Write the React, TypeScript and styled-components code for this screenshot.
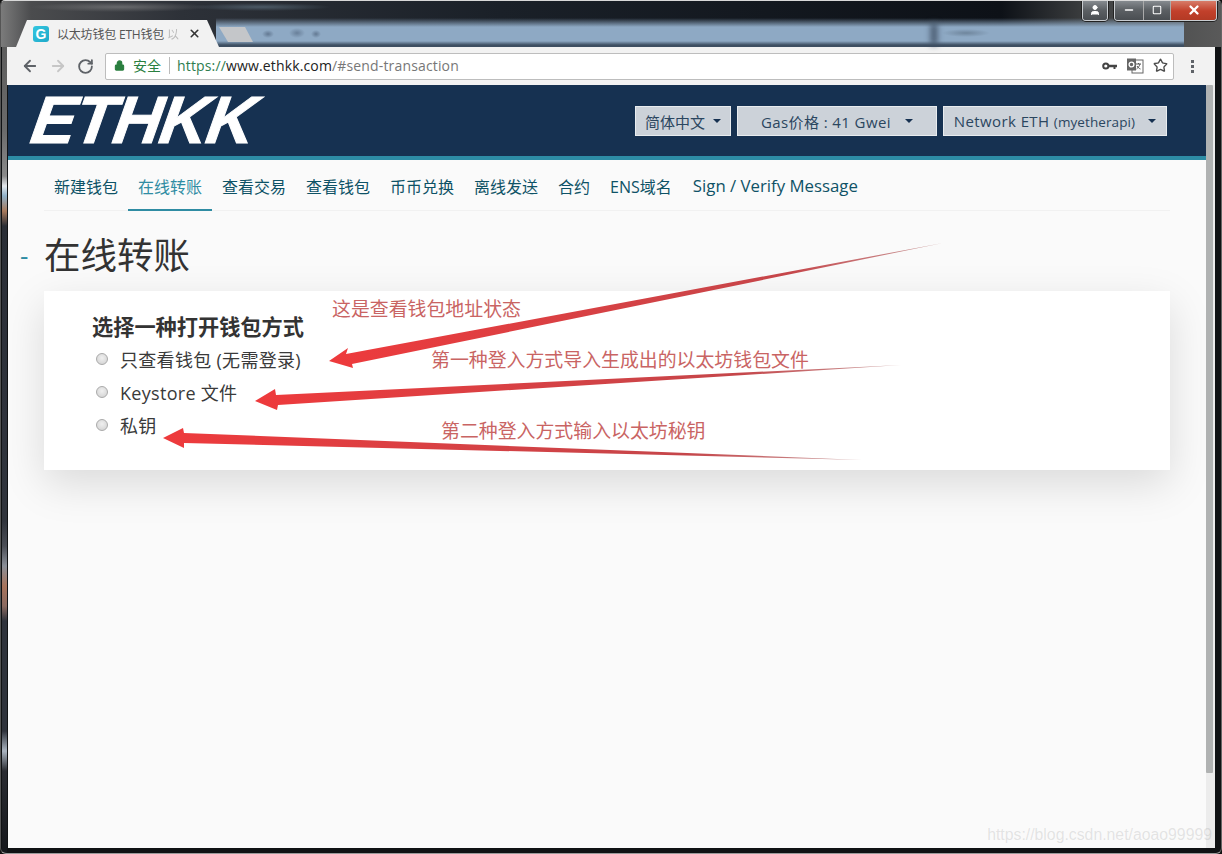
import React from "react";
import styled, { createGlobalStyle } from "styled-components";
import { ArrowLeft, ArrowRight, RotateCw, Lock, Star, X, Minus, User, Square } from "lucide-react";

const CJK = `"Open Sans", "Noto Sans CJK SC", sans-serif`;

const Global = createGlobalStyle`
  html, body { margin: 0; padding: 0; overflow: hidden; background: #111; }
  * { box-sizing: border-box; }
`;

const Win = styled.div`
  position: relative;
  width: 1222px;
  height: 854px;
  display: flex;
  flex-direction: column;
  overflow: hidden;
  font-family: ${CJK};
  background:
    linear-gradient(180deg,
      #555 0, #6b6b6b 130px, #8a8a8a 175px, #e4e8ec 185px, #8fb0c8 195px, #a87a5c 210px, #2a2e36 225px,
      #2f333c 420px, #30343c 520px, #4a4d55 545px, #8a8f98 565px, #a8745c 585px, #8a6a60 605px, #2f333c 620px,
      #2f333c 730px, #aab4c0 750px, #2a2c32 770px, #15171b 854px) no-repeat 1px 0 / 5px 100%,
    #101214;
  border-top: 1px solid #d8d8d8;
  border-left: 1px solid #555;
  border-right: 1px solid #666;
  border-bottom: 1px solid #9a9a9a;
  border-radius: 5px 5px 6px 6px;
`;

const TabStrip = styled.div`
  position: relative;
  height: 46px;
  flex: none;
  display: flex;
  align-items: flex-end;
  padding-left: 15px;
  background:
    radial-gradient(ellipse 6px 4px at 267px 33px, rgba(80,100,125,.7), transparent),
    radial-gradient(ellipse 8px 5px at 296px 32px, rgba(80,100,125,.6), transparent),
    radial-gradient(ellipse 5px 4px at 315px 33px, rgba(80,100,125,.7), transparent),
    radial-gradient(ellipse 24px 4px at 965px 32px, rgba(90,110,130,.6), transparent),
    linear-gradient(180deg, rgba(0,0,0,0) 0, rgba(0,0,0,0) 17px, #8ea9c4 26px, #8ea9c4 40px, #3e4f62 44px, #3e4f62 46px) no-repeat 215px 0 / 968px 100%,
    radial-gradient(ellipse 90px 5px at 120px 6px, rgba(150,150,150,.5), transparent),
    radial-gradient(ellipse 70px 4px at 260px 6px, rgba(100,120,135,.6), transparent),
    linear-gradient(90deg, #7b7b7b 0, #4b4c4e 30px, #2d3138 180px, #1a2028 500px, #0d1117 1000px, #3f4142 1090px, #5a5a5a 1222px);
`;

const Seam = styled.div`
  position: absolute;
  left: 930px;
  top: 22px;
  width: 6px;
  height: 22px;
  background: #3f4f63;
  filter: blur(3px);
`;

const Tab = styled.div`
  width: 203px;
  height: 27px;
  display: flex;
  align-items: center;
  gap: 8px;
  padding: 0 18px 0 17px;
  background: #f2f2f2;
  clip-path: polygon(0 100%, 11px 0, calc(100% - 12px) 0, 100% 100%);
  font-size: 12px;
  color: #555;
  white-space: nowrap;
`;

const Favicon = styled.span`
  flex: none;
  width: 16px;
  height: 16px;
  border-radius: 3px;
  background: linear-gradient(135deg, #34c6e0, #1fa9c9);
  color: #fff;
  font: bold 14px/16px "Liberation Sans", sans-serif;
  text-align: center;
`;

const TabTitle = styled.span`
  flex: 1;
  min-width: 0;
  overflow: hidden;
  letter-spacing: -0.2px;
`;

const FadedChar = styled.span`
  opacity: .35;
`;

const NewTab = styled.div`
  width: 34px;
  height: 15px;
  margin: 0 0 5px 0;
  background: #c4c6c9;
  clip-path: polygon(0 0, 26px 0, 100% 100%, 9px 100%);
`;

const Caption = styled.div`
  position: absolute;
  right: 4px;
  top: -1px;
  display: flex;
  gap: 6px;
`;

const CapGroup = styled.div`
  display: flex;
  height: 21px;
  border: 1px solid #c8ccd0;
  border-top: none;
  border-radius: 0 0 4px 4px;
  overflow: hidden;
  box-shadow: 0 0 0 1px #222;
`;

const CapBtn = styled.div<{ $w: number; $close?: boolean }>`
  width: ${(p) => p.$w}px;
  display: flex;
  align-items: center;
  justify-content: center;
  color: #fff;
  background: ${(p) =>
    p.$close
      ? "linear-gradient(180deg, #d9826f 0, #c2402b 55%, #b33a25 100%)"
      : "linear-gradient(180deg, #8a8f94 0, #5c6064 50%, #4a4e52 100%)"};
  & + & { border-left: 1px solid #aaa; }
`;

const Toolbar = styled.div`
  flex: none;
  height: 38px;
  margin: 0 6px 0 6px;
  display: flex;
  align-items: center;
  padding: 0 21px 0 14px;
  background: #f2f2f2;
  color: #5f6368;
`;

const NavIcon = styled.span<{ $dim?: boolean }>`
  display: flex;
  width: 28px;
  color: ${(p) => (p.$dim ? "#c6c6c6" : "#5f6368")};
`;

const Omnibox = styled.div`
  flex: 1;
  height: 27px;
  display: flex;
  align-items: center;
  padding: 0 5px 1px 8px;
  background: #fff;
  border: 1px solid #bdbdbd;
  border-radius: 2px;
`;

const Secure = styled.span`
  display: flex;
  align-items: center;
  gap: 8px;
  color: #2a7f3f;
  font-size: 14px;
  padding-right: 8px;
  margin-right: 7px;
  border-right: 1px solid #bbb;
  line-height: 17px;
`;

const Url = styled.span`
  flex: 1;
  color: #777;
  letter-spacing: .15px;
  white-space: nowrap;
  font-size: 14px;
`;

const UrlScheme = styled.span`
  color: #2e7d4f;
`;

const UrlHost = styled.span`
  color: #222;
`;

const OmniIcons = styled.div`
  display: flex;
  align-items: center;
  gap: 9px;
  color: #4d4d4d;
`;

const Dots = styled.div`
  flex: none;
  width: 3px;
  height: 14px;
  margin-left: 17px;
  background: radial-gradient(circle at center, #5f6368 1.5px, transparent 1.6px) 0 0 / 3px 5px;
`;

const Viewport = styled.div`
  flex: 1;
  min-height: 0;
  margin: 0 6px 5px 7px;
  display: flex;
  background: #fafafa;
`;

const Page = styled.div`
  flex: 1;
  min-width: 0;
  display: flex;
  flex-direction: column;
`;

const Scrollbar = styled.div`
  flex: none;
  width: 9px;
  padding-right: 2px;
  background: #ececec;
  display: flex;
`;

const Thumb = styled.div`
  width: 100%;
  height: 688px;
  background: #b0b2b2;
  border-radius: 1px;
`;

const Header = styled.header`
  flex: none;
  height: 75px;
  display: flex;
  align-items: flex-start;
  justify-content: space-between;
  padding: 0 39px 0 22px;
  background: #163151;
  border-bottom: 4px solid #2d8ca5;
`;

const Logo = styled.div`
  font: italic 700 67px/69px "Liberation Sans", sans-serif;
  color: #fff;
  letter-spacing: -1.8px;
  margin: 0 0 0 -3px;
  transform: skewX(-9deg);
  transform-origin: 0 100%;
  -webkit-text-stroke: 1px #fff;
`;

const Dropdowns = styled.div`
  display: flex;
  gap: 6px;
  margin-top: 21px;
`;

const Dropdown = styled.div<{ $w: number }>`
  width: ${(p) => p.$w}px;
  height: 30px;
  display: flex;
  align-items: center;
  justify-content: center;
  background: #ccd2d9;
  border: 1px solid #e8ecef;
  color: #2b465f;
  font-size: 15px;
  letter-spacing: 0;
  white-space: nowrap;
`;

const Spaced = styled.span<{ $s: number }>`
  letter-spacing: ${(p) => p.$s}px;
`;

const Small = styled.small`
  font-size: 13.5px;
  letter-spacing: .1px;
`;

const Caret = styled.i<{ $gap: number }>`
  width: 0;
  height: 0;
  margin-left: ${(p) => p.$gap}px;
  border-left: 4px solid transparent;
  border-right: 4px solid transparent;
  border-top: 4px solid #163151;
`;

const NavWrap = styled.nav`
  flex: none;
  height: 51px;
  margin: 0 36px;
  display: flex;
  border-bottom: 1px solid #f1f1f1;
`;

const NavTab = styled.a<{ $on?: boolean; $latin?: boolean }>`
  display: flex;
  align-items: center;
  height: 51px;
  padding: 2px 10px 0 ${(p) => (p.$latin ? 11 : 10)}px;
  font-size: ${(p) => (p.$latin ? 16.8 : 16)}px;
  white-space: nowrap;
  color: ${(p) => (p.$on ? "#2f8ca3" : "#0e5266")};
  border-bottom: 2px solid ${(p) => (p.$on ? "#2f8ca3" : "transparent")};
`;

const Title = styled.div`
  flex: none;
  display: flex;
  align-items: center;
  height: 80px;
  padding: 4px 0 0 12px;
`;

const Dash = styled.span`
  width: 24px;
  color: #2f8ca3;
  font-size: 26px;
  line-height: 30px;
  padding-top: 3px;
`;

const H1 = styled.h1`
  margin: 0;
  font-size: 36.5px;
  font-weight: 400;
  color: #333;
`;

const Card = styled.section`
  flex: none;
  height: 179px;
  margin: 0 36px;
  padding: 21px 48px;
  background: #fff;
  box-shadow: 0 14px 40px rgba(0, 0, 0, .13);
`;

const H2 = styled.h2`
  margin: 0;
  font-size: 21.2px;
  line-height: 30px;
  font-weight: 700;
  color: #333;
`;

const Option = styled.label`
  display: flex;
  align-items: center;
  height: 33px;
  padding-left: 4px;
  gap: 12px;
  font-size: 18px;
  letter-spacing: .3px;
  color: #3a3a3a;
`;

const Radio = styled.span`
  width: 12px;
  height: 12px;
  border-radius: 50%;
  border: 1px solid #aaa;
  background: radial-gradient(circle at 50% 40%, #f0f0f0, #cfcfcf);
`;

const Overlay = styled.svg`
  position: absolute;
  left: -1px;
  top: -1px;
  width: 1222px;
  height: 854px;
  pointer-events: none;
`;

const Note = styled.div<{ $x: number; $y: number }>`
  position: absolute;
  left: ${(p) => p.$x}px;
  top: ${(p) => p.$y}px;
  font-size: 18.9px;
  line-height: 24px;
  color: #c96463;
  white-space: nowrap;
`;

const Watermark = styled.div`
  position: absolute;
  right: 9px;
  bottom: 8px;
  font: 15.8px/20px "Liberation Sans", sans-serif;
  color: rgba(130, 130, 130, .2);
  white-space: nowrap;
`;

const tabs = ["新建钱包", "在线转账", "查看交易", "查看钱包", "币币兑换", "离线发送", "合约", "ENS域名", "Sign / Verify Message"];

const KeyIcon = () => (
  <svg width="15" height="10" viewBox="0 0 15 10">
    <circle cx="3.8" cy="5" r="2.6" fill="none" stroke="#444" strokeWidth="2" />
    <path d="M6.500 3.800H15V6.200H13.500V8H11.500V6.200H6.500Z" fill="#444" />
  </svg>
);

const TranslateIcon = () => (
  <svg width="18" height="16" viewBox="0 0 18 16">
    <rect x="6" y="2" width="11" height="13" fill="#fff" stroke="#666" />
    <rect x="1" y="0.5" width="9" height="12" fill="#666" />
    <circle cx="5.500" cy="6.500" r="2.400" fill="none" stroke="#fff" strokeWidth="1.300" />
    <path d="M10 6h5M12.500 5v1M14 6c-.5 2-2 4-3.500 5M11 8c1 1.500 2 2.500 3.500 3" fill="none" stroke="#555" />
  </svg>
);

export default function App() {
  return (
    <>
      <Global />
      <Win>
        <TabStrip>
          <Seam />
          <Tab>
            <Favicon>G</Favicon>
            <TabTitle>以太坊钱包 ETH钱包 <FadedChar>以</FadedChar></TabTitle>
            <X size={13} strokeWidth={3} color="#333" />
          </Tab>
          <NewTab />
          <Caption>
            <CapGroup>
              <CapBtn $w={24}><User size={12} fill="#fff" strokeWidth={2} /></CapBtn>
            </CapGroup>
            <CapGroup>
              <CapBtn $w={28}><Minus size={12} strokeWidth={3} /></CapBtn>
              <CapBtn $w={27}><Square size={10} strokeWidth={2.5} /></CapBtn>
              <CapBtn $w={46} $close><X size={14} strokeWidth={4} /></CapBtn>
            </CapGroup>
          </Caption>
        </TabStrip>
        <Toolbar>
          <NavIcon><ArrowLeft size={18} strokeWidth={2.4} /></NavIcon>
          <NavIcon $dim><ArrowRight size={18} strokeWidth={2.4} /></NavIcon>
          <NavIcon><RotateCw size={17} strokeWidth={2.6} /></NavIcon>
          <Omnibox>
            <Secure><Lock size={11} fill="#2a7f3f" strokeWidth={2.4} />安全</Secure>
            <Url><UrlScheme>https://</UrlScheme><UrlHost>www.ethkk.com</UrlHost>/#send-transaction</Url>
            <OmniIcons>
              <KeyIcon />
              <TranslateIcon />
              <Star size={15} strokeWidth={2.2} />
            </OmniIcons>
          </Omnibox>
          <Dots />
        </Toolbar>
        <Viewport>
          <Page>
            <Header>
              <Logo>ETHKK</Logo>
              <Dropdowns>
                <Dropdown $w={96}>简体中文<Caret $gap={8} /></Dropdown>
                <Dropdown $w={200}><Spaced $s={0.4}>Gas价格 : 41 Gwei</Spaced><Caret $gap={14} /></Dropdown>
                <Dropdown $w={224}><Spaced $s={0.4}>Network ETH <Small>(myetherapi)</Small></Spaced><Caret $gap={13} /></Dropdown>
              </Dropdowns>
            </Header>
            <NavWrap>
              {tabs.map((t, i) => (
                <NavTab key={t} $on={i === 1} $latin={i === tabs.length - 1}>{t}</NavTab>
              ))}
            </NavWrap>
            <Title>
              <Dash>-</Dash>
              <H1>在线转账</H1>
            </Title>
            <Card>
              <H2>选择一种打开钱包方式</H2>
              <Option><Radio />只查看钱包 (无需登录)</Option>
              <Option><Radio />Keystore 文件</Option>
              <Option><Radio />私钥</Option>
            </Card>
          </Page>
          <Scrollbar><Thumb /></Scrollbar>
        </Viewport>
        <Overlay viewBox="0 0 1222 854">
          <defs>
            <linearGradient id="ar" x1="0" x2="1" y1="0" y2="0">
              <stop offset="0" stopColor="#ee3a3c" />
              <stop offset=".75" stopColor="#c5464a" />
              <stop offset="1" stopColor="#c9a0a0" />
            </linearGradient>
          </defs>
          <polygon fill="url(#ar)" points="329,361 348,348 346,354 943,243 352,364 353,368" />
          <polygon fill="url(#ar)" points="255,401 275,389 276,395 901,365 278,405 277,410" />
          <polygon fill="url(#ar)" points="163,438 183,428 184,433 862,460 184,443 184,448" />
        </Overlay>
        <Note $x={331} $y={296}>这是查看钱包地址状态</Note>
        <Note $x={430} $y={347}>第一种登入方式导入生成出的以太坊钱包文件</Note>
        <Note $x={440} $y={418}>第二种登入方式输入以太坊秘钥</Note>
        <Watermark>https://blog.csdn.net/aoao99999</Watermark>
      </Win>
    </>
  );
}
